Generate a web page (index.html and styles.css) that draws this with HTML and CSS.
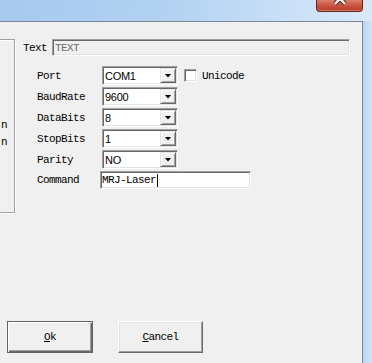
FILE: index.html
```html
<!DOCTYPE html>
<html lang="en">
<head>
  <meta charset="UTF-8">
  <meta name="viewport" content="width=device-width, initial-scale=1.0">
  <title>Serial Command</title>
  <link rel="stylesheet" href="styles.css">
</head>
<body>
  <div class="window">
    <!-- caption -->
    <div class="titlebar">
      <div class="close-btn">
        <svg width="45" height="11" viewBox="0 0 45 11">
          <path d="M18 -7 L28 4 M28 -7 L18 4" stroke="#5a1c12" stroke-width="4.5" fill="none"/>
          <path d="M18 -7 L28 4 M28 -7 L18 4" stroke="#f4f4f4" stroke-width="2.5" fill="none"/>
        </svg>
      </div>
    </div>

    <div class="main">
      <div class="client">
        <div class="top">
          <div class="group">
            <span class="cut">n</span>
            <span class="cut">n</span>
          </div>

          <div class="form">
            <div class="text-row">
              <span class="text-label">Text</span>
              <div class="field disabled">TEXT</div>
            </div>

            <div class="rows">
              <div class="row">
                <span class="label">Port</span>
                <div class="combo"><span class="value">COM1</span><span class="drop"><i></i></span></div>
                <span class="check"></span>
                <span class="check-label">Unicode</span>
              </div>
              <div class="row">
                <span class="label">BaudRate</span>
                <div class="combo"><span class="value">9600</span><span class="drop"><i></i></span></div>
              </div>
              <div class="row">
                <span class="label">DataBits</span>
                <div class="combo"><span class="value">8</span><span class="drop"><i></i></span></div>
              </div>
              <div class="row">
                <span class="label">StopBits</span>
                <div class="combo"><span class="value">1</span><span class="drop"><i></i></span></div>
              </div>
              <div class="row">
                <span class="label">Parity</span>
                <div class="combo"><span class="value">NO</span><span class="drop"><i></i></span></div>
              </div>
              <div class="row command">
                <span class="label">Command</span>
                <div class="field edit">MRJ-Laser<span class="caret"></span></div>
              </div>
            </div>
          </div>
        </div>

        <div class="buttons">
          <button class="btn default"><u>O</u>k</button>
          <button class="btn cancel"><u>C</u>ancel</button>
        </div>
      </div>
      <div class="frame-right"></div>
    </div>
  </div>
</body>
</html>
```

FILE: styles.css
```css
* {
  box-sizing: border-box;
}

body {
  margin: 0;
  width: 372px;
  height: 363px;
  overflow: hidden;
  background: #c3dbf3;
  font-family: "Liberation Mono", monospace;
  font-size: 11px;
  letter-spacing: -0.6px;
  color: #000;
}

.titlebar {
  height: 21px;
  display: flex;
  justify-content: flex-end;
  background: linear-gradient(100deg, #a6c9ee 0%, #b2d2f2 45%, #c8dff7 75%, #d9e9fa 100%);
}

.close-btn {
  width: 47px;
  height: 12px;
  margin-right: 9px;
  border: 1px solid #6a2418;
  border-top: none;
  border-radius: 0 0 4px 4px;
  background: linear-gradient(#dc7e6c, #c8503c 55%, #b53d2b);
  box-shadow: inset 0 -1px 0 rgba(255, 255, 255, 0.3);
  overflow: hidden;
}

.close-btn svg {
  display: block;
}

.main {
  display: flex;
  height: 342px;
}

.client {
  width: 363px;
  background: #f0f0f0;
  border-top: 1px solid #7a8898;
  border-right: 1px solid #7a8898;
  padding-top: 17px;
}

.frame-right {
  width: 9px;
  background: linear-gradient(to right, #b9d5f1, #d3e6f9);
}

.top {
  display: flex;
}

/* etched group box, cut at the left edge */
.group {
  width: 15px;
  height: 174px;
  border: 1px solid #a0a0a0;
  border-left: none;
  box-shadow: inset 0 1px 0 #fff, 1px 1px 0 #fff;
  padding-top: 77px;
  padding-left: 1px;
  display: flex;
  flex-direction: column;
}

.cut {
  line-height: 17px;
}

.form {
  margin-left: 8px;
}

.text-row {
  display: flex;
  align-items: center;
  height: 17px;
}

.text-label {
  width: 29px;
}

.field {
  border: 1px solid;
  border-color: #a0a0a0 #fff #fff #a0a0a0;
  box-shadow: inset 1px 1px 0 #696969, inset -1px -1px 0 #e3e3e3;
  display: flex;
  align-items: center;
}

.field.disabled {
  width: 298px;
  height: 17px;
  padding-left: 2px;
  background: #f0f0f0;
  color: #6d6d6d;
}

.rows {
  margin-top: 10px;
  padding-left: 14px;
}

.row {
  display: flex;
  align-items: center;
  height: 19px;
  margin-bottom: 2px;
}

.label {
  width: 65px;
}

.combo {
  width: 76px;
  height: 19px;
  display: flex;
  align-items: center;
  background: #fff;
  border: 1px solid;
  border-color: #a0a0a0 #fff #fff #a0a0a0;
  box-shadow: inset 1px 1px 0 #696969, inset -1px -1px 0 #e3e3e3;
  padding: 1px;
}

.value {
  flex: 1;
  padding-left: 1px;
  font-family: "Liberation Sans Narrow", "Liberation Sans", sans-serif;
  font-size: 11px;
  letter-spacing: -0.3px;
}

.drop {
  width: 16px;
  height: 15px;
  display: flex;
  align-items: center;
  justify-content: center;
  background: #f0f0f0;
  border: 1px solid;
  border-color: #e3e3e3 #696969 #696969 #e3e3e3;
  box-shadow: inset 1px 1px 0 #fff, inset -1px -1px 0 #a0a0a0;
}

.drop i {
  width: 7px;
  height: 4px;
  background: #000;
  clip-path: polygon(0 0, 100% 0, 50% 100%);
}

.check {
  width: 13px;
  height: 13px;
  margin-left: 6px;
  background: #fff;
  border: 1px solid;
  border-color: #a0a0a0 #fff #fff #a0a0a0;
  box-shadow: inset 1px 1px 0 #696969, inset -1px -1px 0 #e3e3e3;
}

.check-label {
  margin-left: 5px;
}

.row.command {
  margin-top: 2px;
  height: 18px;
}

.field.edit {
  width: 151px;
  height: 18px;
  margin-left: -2px;
  padding-left: 1px;
  background: #fff;
}

.caret {
  width: 1px;
  height: 13px;
  margin-left: 1px;
  background: #000;
}

.buttons {
  display: flex;
  gap: 25px;
  margin-top: 108px;
  padding-left: 7px;
}

.btn {
  width: 86px;
  height: 32px;
  padding: 0;
  font: inherit;
  letter-spacing: inherit;
  color: #000;
  background: #f0f0f0;
  border: 1px solid;
  border-color: #fff #696969 #696969 #fff;
  box-shadow: inset -1px -1px 0 #a0a0a0, inset 1px 1px 0 #e3e3e3;
}

.btn.default {
  border: 1px solid #646464;
  box-shadow: inset 1px 1px 0 #fff, inset -1px -1px 0 #696969, inset -2px -2px 0 #a0a0a0;
}

.btn.cancel {
  width: 85px;
}
```
